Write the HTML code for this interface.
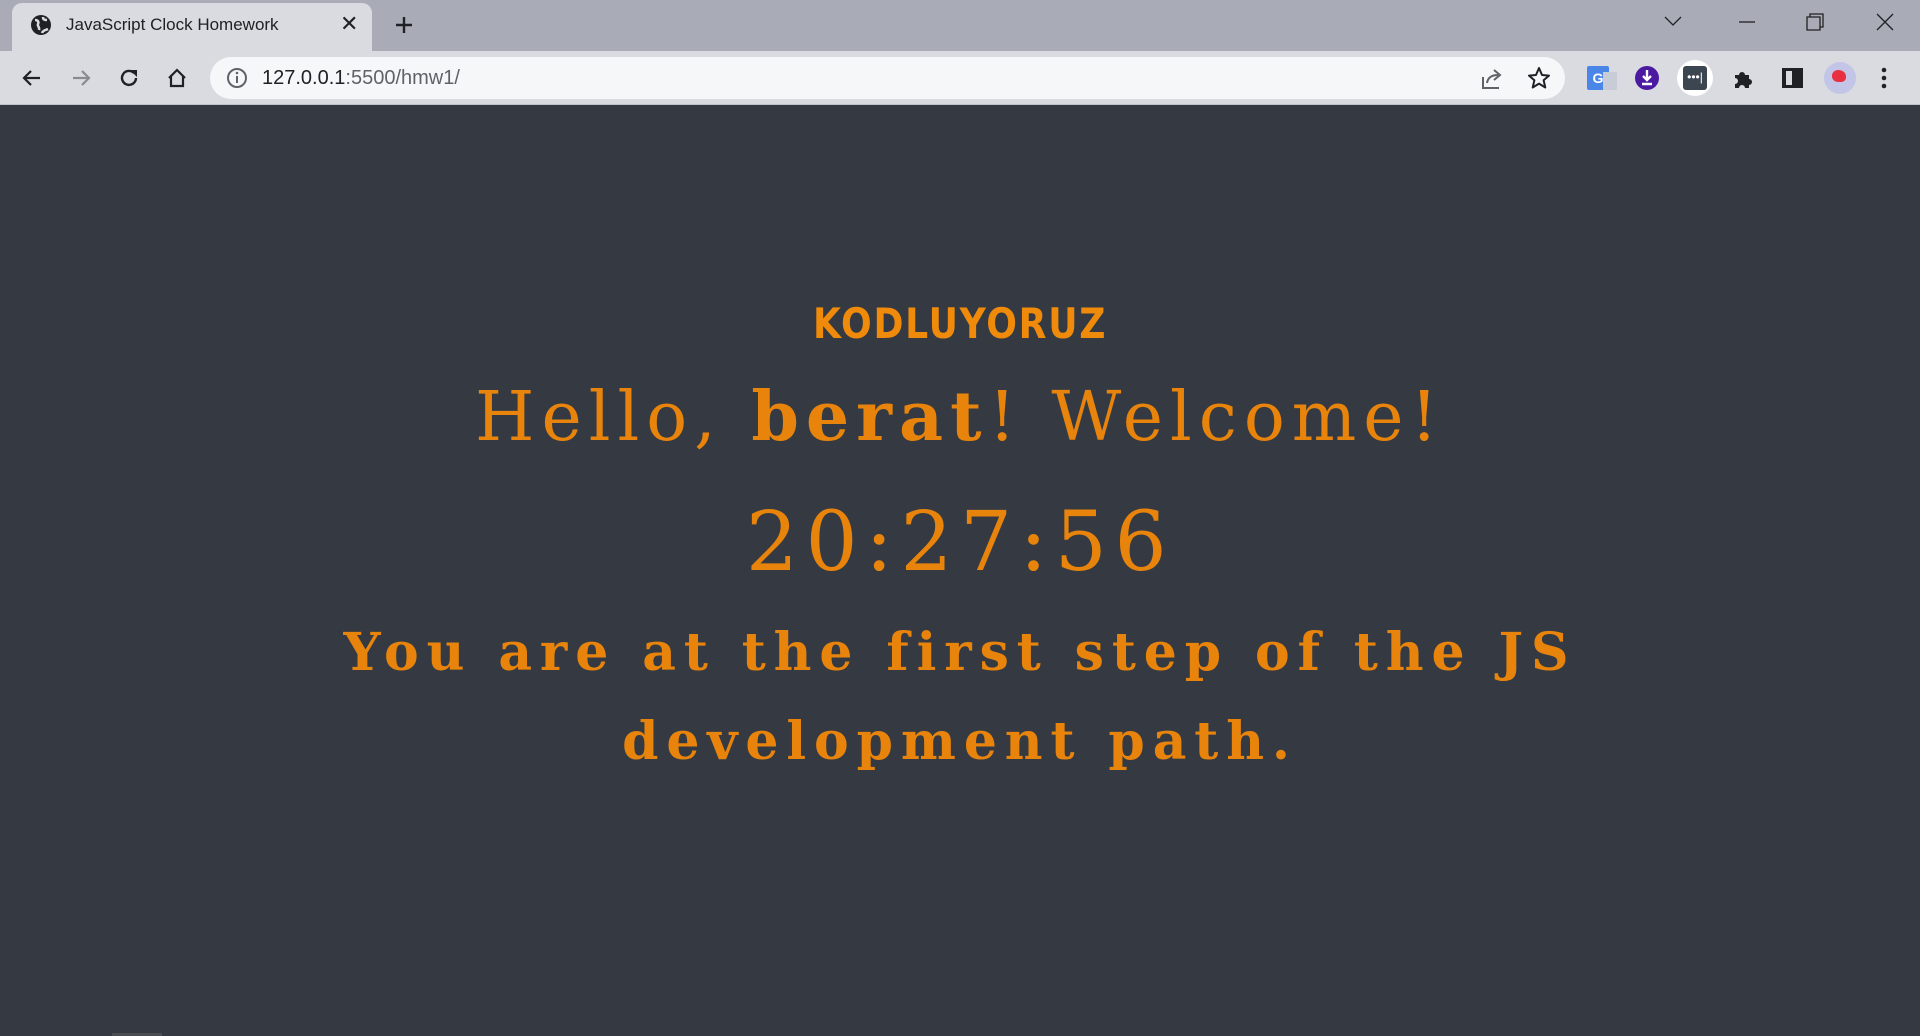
<!DOCTYPE html>
<html><head><meta charset="utf-8"><style>
*{margin:0;padding:0;box-sizing:border-box}
body{width:1920px;height:1036px;overflow:hidden;background:#353a42;font-family:"Liberation Sans",sans-serif;position:relative}
.tabbar{position:absolute;left:0;top:0;width:1920px;height:51px;background:#a9acb7}
.tab{position:absolute;left:12px;top:3px;width:360px;height:48px;background:#dadbe0;border-radius:10px 10px 0 0}
.toolbar{position:absolute;left:0;top:51px;width:1920px;height:54px;background:#dadbe0;border-bottom:1px solid #c0c2c8}
.omni{position:absolute;left:210px;top:57px;width:1355px;height:42px;background:#f6f7f9;border-radius:21px}
.t{position:absolute;white-space:nowrap}
.or{color:#e8840b;font-family:"DejaVu Serif",serif;text-align:center;position:absolute;left:0;width:1920px;white-space:nowrap}
</style></head><body>
<div class="tabbar"></div>
<div class="tab"></div>
<svg class="t" style="left:30px;top:14px" width="22" height="22" viewBox="0 0 22 22"><circle cx="11" cy="11" r="10" fill="#202124"/><path d="M5 6c3 0 4 2 3 4s2 3 1 6M13 3c0 3 2 3 4 3M12 19c1-3 4-3 6-4" stroke="#dadbe0" stroke-width="2.5" fill="none"/></svg>
<div class="t" style="left:66px;top:15px;font-size:17px;color:#202124">JavaScript Clock Homework</div>
<div class="t" style="left:340px;top:11px;font-size:22px;color:#202124">✕</div>
<svg class="t" style="left:394px;top:15px" width="20" height="20"><path d="M10 2v16M2 10h16" stroke="#202124" stroke-width="2.4"/></svg>
<svg class="t" style="left:1663px;top:14px" width="20" height="14"><path d="M2 3l8 8 8-8" stroke="#202124" stroke-width="1.3" fill="none"/></svg>
<svg class="t" style="left:1738px;top:20px" width="20" height="4"><path d="M1 2h16" stroke="#202124" stroke-width="1.3"/></svg>
<svg class="t" style="left:1806px;top:13px" width="18" height="18"><path d="M4 4V1h13v13h-3M1 4h13v13H1z" stroke="#202124" stroke-width="1.3" fill="none"/></svg>
<svg class="t" style="left:1876px;top:13px" width="18" height="18"><path d="M1 1l16 16M17 1L1 17" stroke="#202124" stroke-width="1.3"/></svg>
<div class="toolbar"></div>
<div class="omni"></div>
<svg class="t" style="left:20px;top:66px" width="24" height="24"><path d="M20 12H5M11 5l-7 7 7 7" stroke="#202124" stroke-width="2.2" fill="none"/></svg>
<svg class="t" style="left:69px;top:66px" width="24" height="24"><path d="M4 12h15M13 5l7 7-7 7" stroke="#8a8b8f" stroke-width="2.2" fill="none"/></svg>
<svg class="t" style="left:117px;top:66px" width="24" height="24"><path d="M19 12a7 7 0 1 1-2-5" stroke="#202124" stroke-width="2.4" fill="none"/><path d="M13 4h7v7z" fill="#202124"/></svg>
<svg class="t" style="left:165px;top:66px" width="24" height="24"><path d="M4 12l8-8 8 8M6 10v10h12V10" stroke="#202124" stroke-width="2.2" fill="none"/></svg>
<svg class="t" style="left:226px;top:67px" width="22" height="22"><circle cx="11" cy="11" r="9" stroke="#5f6368" stroke-width="2" fill="none"/><path d="M11 9v7" stroke="#5f6368" stroke-width="2"/><circle cx="11" cy="6" r="1.3" fill="#5f6368"/></svg>
<div class="t" style="left:262px;top:67px;font-size:20px;color:#202124">127.0.0.1<span style="color:#5f6368">:5500/hmw1/</span></div>
<svg class="t" style="left:1480px;top:67px" width="24" height="24"><path d="M3 10v11h16M7 16c1-6 5-8 11-8M14 3l6 5-6 5" stroke="#5f6368" stroke-width="2" fill="none"/></svg>
<svg class="t" style="left:1527px;top:66px" width="24" height="24"><path d="M12 2l3 7 7 .6-5.4 4.6 1.7 7.3L12 17.6 5.7 21.5l1.7-7.3L2 9.6 9 9z" stroke="#202124" stroke-width="2" fill="none" stroke-linejoin="round"/></svg>
<div class="t" style="left:1587px;top:66px;width:22px;height:24px;background:#4a86e8;border-radius:2px;color:#fff;font-size:14px;font-weight:bold;text-align:center;line-height:24px">G</div>
<div class="t" style="left:1603px;top:72px;width:14px;height:18px;background:#c7ccd6"></div>
<div class="t" style="left:1635px;top:66px;width:24px;height:24px;border-radius:50%;background:#4b1aa0"></div>
<svg class="t" style="left:1639px;top:68px" width="16" height="20"><path d="M8 2v10M4 8l4 4 4-4M3 16h10" stroke="#fff" stroke-width="2.4" fill="none"/></svg>
<div class="t" style="left:1677px;top:60px;width:36px;height:36px;border-radius:50%;background:#fff"></div>
<div class="t" style="left:1683px;top:66px;width:24px;height:24px;border-radius:3px;background:#3b4651;color:#fff;font-size:12px;line-height:22px;text-align:center">•••|</div>
<svg class="t" style="left:1731px;top:66px" width="24" height="24"><path d="M4 9h4a3 3 0 0 1 6 0h4v4a3 3 0 0 1 0 6v3H14a3 3 0 0 0-6 0H4v-4a3 3 0 0 0 0-6z" fill="#202124"/></svg>
<div class="t" style="left:1782px;top:68px;width:21px;height:20px;border:3px solid #202124;border-left-width:4px;background:#dadbe0"><div style="position:absolute;right:0;top:0;width:8px;height:14px;background:#202124"></div></div>
<div class="t" style="left:1824px;top:62px;width:32px;height:32px;border-radius:50%;background:#c2c5e6"></div>
<div class="t" style="left:1832px;top:70px;width:14px;height:12px;border-radius:50% 60% 40% 50%;background:#e83040"></div>
<svg class="t" style="left:1880px;top:66px" width="8" height="24"><circle cx="4" cy="4" r="2.3" fill="#202124"/><circle cx="4" cy="12" r="2.3" fill="#202124"/><circle cx="4" cy="20" r="2.3" fill="#202124"/></svg>

<div class="t" style="left:0;width:1920px;top:299px;text-align:center"><span style="display:inline-block;font-family:'DejaVu Sans','Liberation Sans',sans-serif;font-weight:bold;font-size:42px;color:#f08a0a;letter-spacing:2px;transform:scaleX(0.86)">KODLUYORUZ</span></div>
<div class="or" style="top:377px;font-size:68px;letter-spacing:7px;line-height:80px">Hello, <b>berat</b>! Welcome!</div>
<div class="or" style="top:495px;font-size:82px;letter-spacing:7.5px;line-height:96px">20:27:56</div>
<div class="or" style="top:608px;font-size:52px;font-weight:bold;letter-spacing:7.9px;line-height:89px">You are at the first step of the JS<br>development path.</div>
<div class="t" style="left:112px;top:1033px;width:50px;height:3px;background:#4a4d52"></div>
</body></html>
